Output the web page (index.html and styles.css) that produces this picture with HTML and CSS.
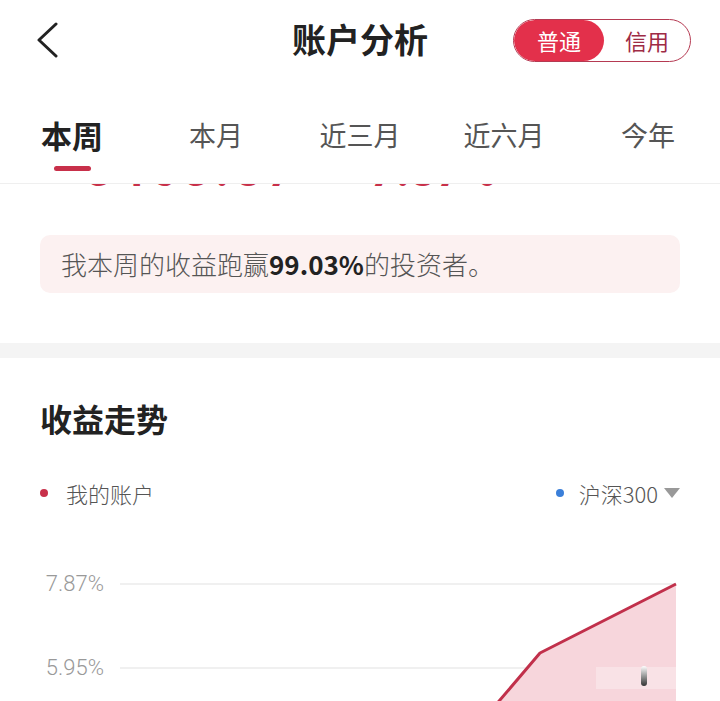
FILE: index.html
```html
<!DOCTYPE html>
<html lang="zh-CN">
<head>
<meta charset="utf-8">
<title>账户分析</title>
<link rel="stylesheet" href="styles.css">
</head>
<body>
<div class="page">
  <header class="topbar">
    <button class="back" aria-label="返回">
      <svg width="24" height="36" viewBox="0 0 24 36"><polyline points="20,2 3,18 20,34" fill="none" stroke="#222" stroke-width="3" stroke-linecap="round" stroke-linejoin="round"/></svg>
    </button>
    <h1 class="title">账户分析</h1>
    <div class="switch">
      <span class="switch-item active">普通</span>
      <span class="switch-item">信用</span>
    </div>
  </header>

  <nav class="tabs">
    <div class="tab active"><span class="tab-label">本周</span><span class="tab-bar"></span></div>
    <div class="tab"><span class="tab-label">本月</span></div>
    <div class="tab"><span class="tab-label">近三月</span></div>
    <div class="tab"><span class="tab-label">近六月</span></div>
    <div class="tab"><span class="tab-label">今年</span></div>
  </nav>

  <section class="summary">
    <div class="amounts">
      <div class="amounts-inner">
        <span class="amount">3463.87</span>
        <span class="amount pct">+7.87%</span>
      </div>
    </div>
    <div class="rank">我本周的收益跑赢<b>99.03%</b>的投资者。</div>
  </section>

  <div class="band"></div>

  <section class="trend">
    <h2 class="trend-title">收益走势</h2>
    <div class="legend">
      <span class="legend-item"><i class="dot red"></i>我的账户</span>
      <span class="legend-item"><i class="dot blue"></i>沪深300<i class="caret"></i></span>
    </div>
    <svg class="chart" width="720" height="161" viewBox="0 0 720 161">
      <defs>
        <linearGradient id="mark" x1="0" y1="0" x2="0" y2="1">
          <stop offset="0" stop-color="#ffffff"/>
          <stop offset="1" stop-color="#333333"/>
        </linearGradient>
      </defs>
      <text x="104" y="49" text-anchor="end" class="axis">7.87%</text>
      <text x="104" y="133" text-anchor="end" class="axis">5.95%</text>
      <line x1="120" y1="42" x2="676" y2="42" stroke="#ebebeb" stroke-width="1.5"/>
      <line x1="120" y1="126" x2="676" y2="126" stroke="#ebebeb" stroke-width="1.5"/>
      <polygon points="494,165 540,111 676,42 676,165" fill="#f7d6dc"/>
      <polyline points="494,165 540,111 676,42" fill="none" stroke="#c1304b" stroke-width="3" stroke-linejoin="round"/>
      <rect x="596" y="125" width="112" height="22" fill="#ffffff" opacity="0.3"/>
      <rect x="641" y="124" width="6" height="20" rx="3" fill="url(#mark)"/>
    </svg>
  </section>
</div>
</body>
</html>
```

FILE: styles.css
```css
* { box-sizing: border-box; }
html, body { margin: 0; padding: 0; }
body {
  font-family: "Noto Sans CJK SC", "Noto Sans", sans-serif;
  background: #fff;
  color: #222;
}
.page {
  width: 720px;
  height: 701px;
  overflow: hidden;
  background: #fff;
}
.topbar {
  height: 82px;
  display: flex;
  align-items: center;
  justify-content: space-between;
  padding: 0 29px 2px 36px;
  position: relative;
}
.back {
  border: 0;
  background: none;
  padding: 0;
  width: 24px;
  height: 36px;
  display: flex;
}
.title {
  position: absolute;
  left: 0;
  right: 0;
  top: 15px;
  margin: 0 auto;
  width: 200px;
  text-align: center;
  font-size: 34px;
  line-height: 48px;
  font-weight: 700;
  color: #222;
}
.switch {
  width: 178px;
  height: 43px;
  border: 1.5px solid #b53a52;
  border-radius: 22px;
  display: flex;
  align-items: center;
  overflow: hidden;
}
.switch-item {
  flex: 1;
  height: 100%;
  display: flex;
  align-items: center;
  justify-content: center;
  font-size: 22px;
  color: #9e2b45;
}
.switch-item.active {
  flex: 0 0 90px;
  background: #e3304b;
  color: #fff;
  border-radius: 22px;
}
.tabs {
  height: 102px;
  display: grid;
  grid-template-columns: repeat(5, 144px);
  border-bottom: 1.5px solid #efefef;
}
.tab {
  display: flex;
  flex-direction: column;
  align-items: center;
  padding-top: 33px;
}
.tab-label {
  height: 40px;
  line-height: 40px;
  font-size: 27px;
  color: #555;
}
.tab.active .tab-label {
  font-size: 31px;
  font-weight: 700;
  color: #222;
}
.tab-bar {
  margin-top: 11px;
  width: 37px;
  height: 5px;
  border-radius: 3px;
  background: #c8304a;
}
.summary {
  padding-bottom: 50px;
}
.amounts {
  height: 9px;
  overflow: hidden;
}
.amounts-inner {
  display: flex;
  gap: 45px;
  padding-left: 86px;
  margin-top: -37px;
  font-family: "Roboto", "Noto Sans CJK SC", sans-serif;
  font-size: 46px;
  line-height: 46px;
  font-weight: 700;
  color: #c8304a;
}
.amount { letter-spacing: 6px; }
.amount.pct { letter-spacing: 0; }
.rank {
  margin: 42px 40px 0;
  height: 58px;
  line-height: 58px;
  padding-left: 21px;
  border-radius: 10px;
  background: #fcf1f1;
  font-size: 26px;
  font-weight: 300;
  color: #555;
}
.rank b {
  color: #222;
  font-weight: 700;
}
.band {
  height: 15px;
  background: #f4f4f4;
}
.trend {
  padding: 38px 40px 0 40px;
}
.trend-title {
  margin: 0;
  font-size: 32px;
  line-height: 44px;
  font-weight: 700;
  color: #222;
}
.legend {
  margin-top: 38px;
  display: flex;
  justify-content: space-between;
  align-items: center;
  height: 30px;
}
.legend-item {
  display: flex;
  align-items: center;
  font-size: 22px;
  font-weight: 300;
  color: #555;
}
.dot {
  width: 8px;
  height: 8px;
  border-radius: 50%;
  margin: 0 18px 0 0;
  display: inline-block;
}
.dot.red { background: #c8304a; }
.dot.blue { background: #3b7fd9; margin-right: 15px; }
.caret {
  display: inline-block;
  width: 0;
  height: 0;
  margin-left: 6px;
  border-left: 8px solid transparent;
  border-right: 8px solid transparent;
  border-top: 10px solid #999;
}
.chart {
  display: block;
  margin: 34px 0 0 -40px;
}
.axis {
  font-family: "Roboto", "Noto Sans", sans-serif;
  font-size: 22px;
  font-weight: 300;
  fill: #999;
}
```
